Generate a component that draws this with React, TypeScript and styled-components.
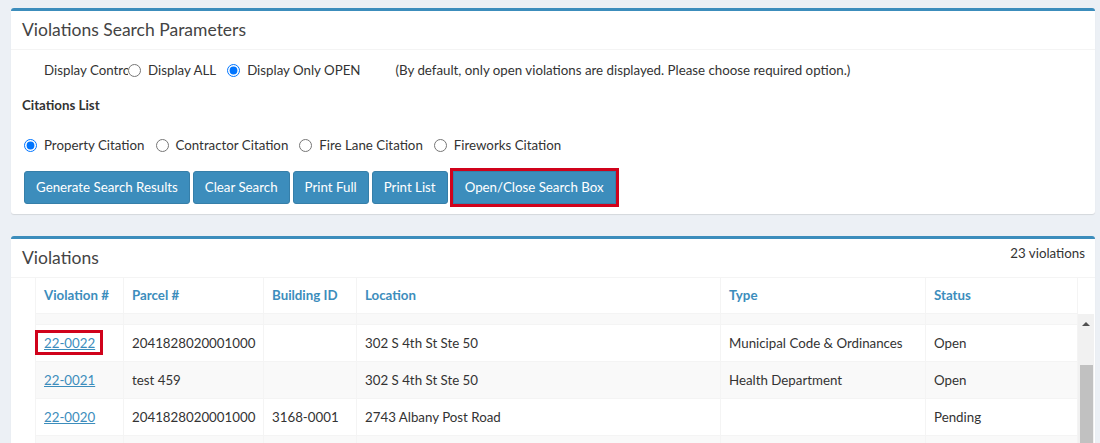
import React from 'react';
import styled, { createGlobalStyle } from 'styled-components';

const GlobalStyle = createGlobalStyle`
  html, body {
    margin: 0;
    padding: 0;
    background: #ecf0f5;
    font-family: "Source Sans Pro", Lato, "Liberation Sans", sans-serif;
    font-size: 13.3px;
    color: #333;
    overflow: hidden;
  }
  * { box-sizing: border-box; }
`;

const Page = styled.div`
  padding: 8px 5px 0 11px;
  height: 443px;
  overflow: hidden;
`;

const Box = styled.section`
  background: #fff;
  border-top: 3px solid #3c8dbc;
  border-radius: 3px;
  box-shadow: 0 1px 1px rgba(0, 0, 0, 0.1);
  margin-bottom: 22px;
`;

const BoxHeader = styled.div`
  display: flex;
  justify-content: space-between;
  align-items: flex-start;
  padding: 10px 10px 10px 11px;
  border-bottom: 1px solid #f4f4f4;
`;

const BoxTitle = styled.h3`
  margin: 0;
  font-size: 17.5px;
  line-height: 18px;
  font-weight: 400;
  color: #444;
`;

const Count = styled.span`
  margin-top: -6px;
  line-height: 20px;
  color: #333;
`;

const FormBody = styled.div`
  padding: 10px 10px 10px 13px;
`;

const FilterRow = styled.div`
  display: flex;
  align-items: center;
  height: 20px;
  padding-left: 20px;
  white-space: nowrap;
`;

const ClippedLabel = styled.span`
  width: 84px;
  overflow: hidden;
  white-space: nowrap;
`;

const Option = styled.label<{ $gap?: number }>`
  display: inline-flex;
  align-items: center;
  margin-right: ${(p) => p.$gap ?? 11}px;
  cursor: pointer;
`;

const RadioInput = styled.input.attrs({ type: 'radio' })`
  width: 13px;
  height: 13px;
  margin: 0 7px 0 0;
  accent-color: #0075ff;
`;

const Hint = styled.span`
  color: #333;
`;

const SectionLabel = styled.div`
  margin-top: 15px;
  font-weight: 700;
  line-height: 20px;
  margin-left: -2px;
`;

const CitationRow = styled.div`
  display: flex;
  align-items: center;
  height: 20px;
  margin-top: 20px;
`;

const ButtonRow = styled.div`
  display: flex;
  gap: 3px;
  margin-top: 16px;
`;

const Button = styled.button<{ $marked?: boolean }>`
  font-family: inherit;
  font-size: 13.3px;
  line-height: 20px;
  padding: 5px 11px 6px;
  color: #fff;
  background: #3c8dbc;
  border: 1px solid #367fa9;
  border-radius: 3px;
  cursor: pointer;
  ${(p) =>
    p.$marked &&
    `
    margin-left: 2px;
    border-radius: 0;
    outline: 3px solid #d0021b;
    outline-offset: 0;
  `}
`;

const TableWrap = styled.div`
  padding: 0 1px 0 24px;
`;

const cols = '89px 140px 93px 364px 205px 152px';

const HeadGrid = styled.div`
  display: grid;
  grid-template-columns: ${cols};
  width: 1043px;
`;

const HeadCell = styled.div`
  padding: 8px 8px;
  line-height: 19px;
  font-weight: 700;
  color: #3c8dbc;
  border-right: 1px solid #f4f4f4;
  border-bottom: 1px solid #f4f4f4;
  &:first-child { border-left: 1px solid #f4f4f4; }
`;

const ScrollArea = styled.div`
  display: flex;
  height: 140px;
`;

const BodyGrid = styled.div`
  display: grid;
  grid-template-columns: ${cols};
  grid-auto-rows: min-content;
  width: 1043px;
`;

const Cell = styled.div<{ $striped?: boolean; $stub?: boolean }>`
  padding: ${(p) => (p.$stub ? '0' : '8px')};
  height: ${(p) => (p.$stub ? '11px' : 'auto')};
  line-height: 20px;
  background: ${(p) => (p.$striped ? '#f9f9f9' : '#fff')};
  border-right: 1px solid #f4f4f4;
  border-bottom: 1px solid #f4f4f4;
  white-space: nowrap;
  &:nth-child(6n + 1) { border-left: 1px solid #f4f4f4; }
`;

const CaseLink = styled.a<{ $marked?: boolean }>`
  position: relative;
  color: #3c8dbc;
  text-decoration: underline;
  ${(p) =>
    p.$marked &&
    `
    &::after {
      content: '';
      position: absolute;
      top: -5px;
      bottom: -4px;
      left: -9px;
      right: -8px;
      border: 3px solid #d0021b;
    }
  `}
`;

const Scrollbar = styled.div`
  width: 16px;
  background: #f1f1f1;
  display: flex;
  flex-direction: column;
  align-items: center;
`;

const ScrollArrow = styled.div`
  margin-top: 8px;
  width: 0;
  height: 0;
  border-left: 4px solid transparent;
  border-right: 4px solid transparent;
  border-bottom: 4px solid #505050;
`;

const ScrollThumb = styled.div`
  margin-top: 39px;
  width: 13px;
  flex: 1;
  background: #c1c1c1;
`;

type Row = {
  id: string;
  parcel: string;
  building: string;
  location: string;
  type: string;
  status: string;
};

const rows: Row[] = [
  {
    id: '22-0022',
    parcel: '2041828020001000',
    building: '',
    location: '302 S 4th St Ste 50',
    type: 'Municipal Code & Ordinances',
    status: 'Open',
  },
  {
    id: '22-0021',
    parcel: 'test 459',
    building: '',
    location: '302 S 4th St Ste 50',
    type: 'Health Department',
    status: 'Open',
  },
  {
    id: '22-0020',
    parcel: '2041828020001000',
    building: '3168-0001',
    location: '2743 Albany Post Road',
    type: '',
    status: 'Pending',
  },
  {
    id: '',
    parcel: '',
    building: '',
    location: '',
    type: '',
    status: '',
  },
];

const headers = ['Violation #', 'Parcel #', 'Building ID', 'Location', 'Type', 'Status'];

export default function App() {
  return (
    <Page>
      <GlobalStyle />
      <Box>
        <BoxHeader>
          <BoxTitle>Violations Search Parameters</BoxTitle>
        </BoxHeader>
        <FormBody>
          <FilterRow>
            <ClippedLabel>Display Controls</ClippedLabel>
            <Option $gap={11}>
              <RadioInput name="display" />
              Display ALL
            </Option>
            <Option $gap={35}>
              <RadioInput name="display" defaultChecked />
              Display Only OPEN
            </Option>
            <Hint>(By default, only open violations are displayed. Please choose required option.)</Hint>
          </FilterRow>
          <SectionLabel>Citations List</SectionLabel>
          <CitationRow>
            <Option>
              <RadioInput name="citation" defaultChecked />
              Property Citation
            </Option>
            <Option>
              <RadioInput name="citation" />
              Contractor Citation
            </Option>
            <Option>
              <RadioInput name="citation" />
              Fire Lane Citation
            </Option>
            <Option>
              <RadioInput name="citation" />
              Fireworks Citation
            </Option>
          </CitationRow>
          <ButtonRow>
            <Button>Generate Search Results</Button>
            <Button>Clear Search</Button>
            <Button>Print Full</Button>
            <Button>Print List</Button>
            <Button $marked>Open/Close Search Box</Button>
          </ButtonRow>
        </FormBody>
      </Box>

      <Box>
        <BoxHeader>
          <BoxTitle>Violations</BoxTitle>
          <Count>23 violations</Count>
        </BoxHeader>
        <TableWrap>
          <HeadGrid>
            {headers.map((h) => (
              <HeadCell key={h}>{h}</HeadCell>
            ))}
          </HeadGrid>
          <ScrollArea>
            <BodyGrid>
              {headers.map((h) => (
                <Cell key={`stub-${h}`} $stub $striped />
              ))}
              {rows.map((r, i) => {
                const striped = i % 2 === 1;
                return (
                  <React.Fragment key={i}>
                    <Cell $striped={striped}>
                      {r.id && (
                        <CaseLink href="#" $marked={i === 0}>
                          {r.id}
                        </CaseLink>
                      )}
                    </Cell>
                    <Cell $striped={striped}>{r.parcel}</Cell>
                    <Cell $striped={striped}>{r.building}</Cell>
                    <Cell $striped={striped}>{r.location}</Cell>
                    <Cell $striped={striped}>{r.type}</Cell>
                    <Cell $striped={striped}>{r.status}</Cell>
                  </React.Fragment>
                );
              })}
            </BodyGrid>
            <Scrollbar>
              <ScrollArrow />
              <ScrollThumb />
            </Scrollbar>
          </ScrollArea>
        </TableWrap>
      </Box>
    </Page>
  );
}
